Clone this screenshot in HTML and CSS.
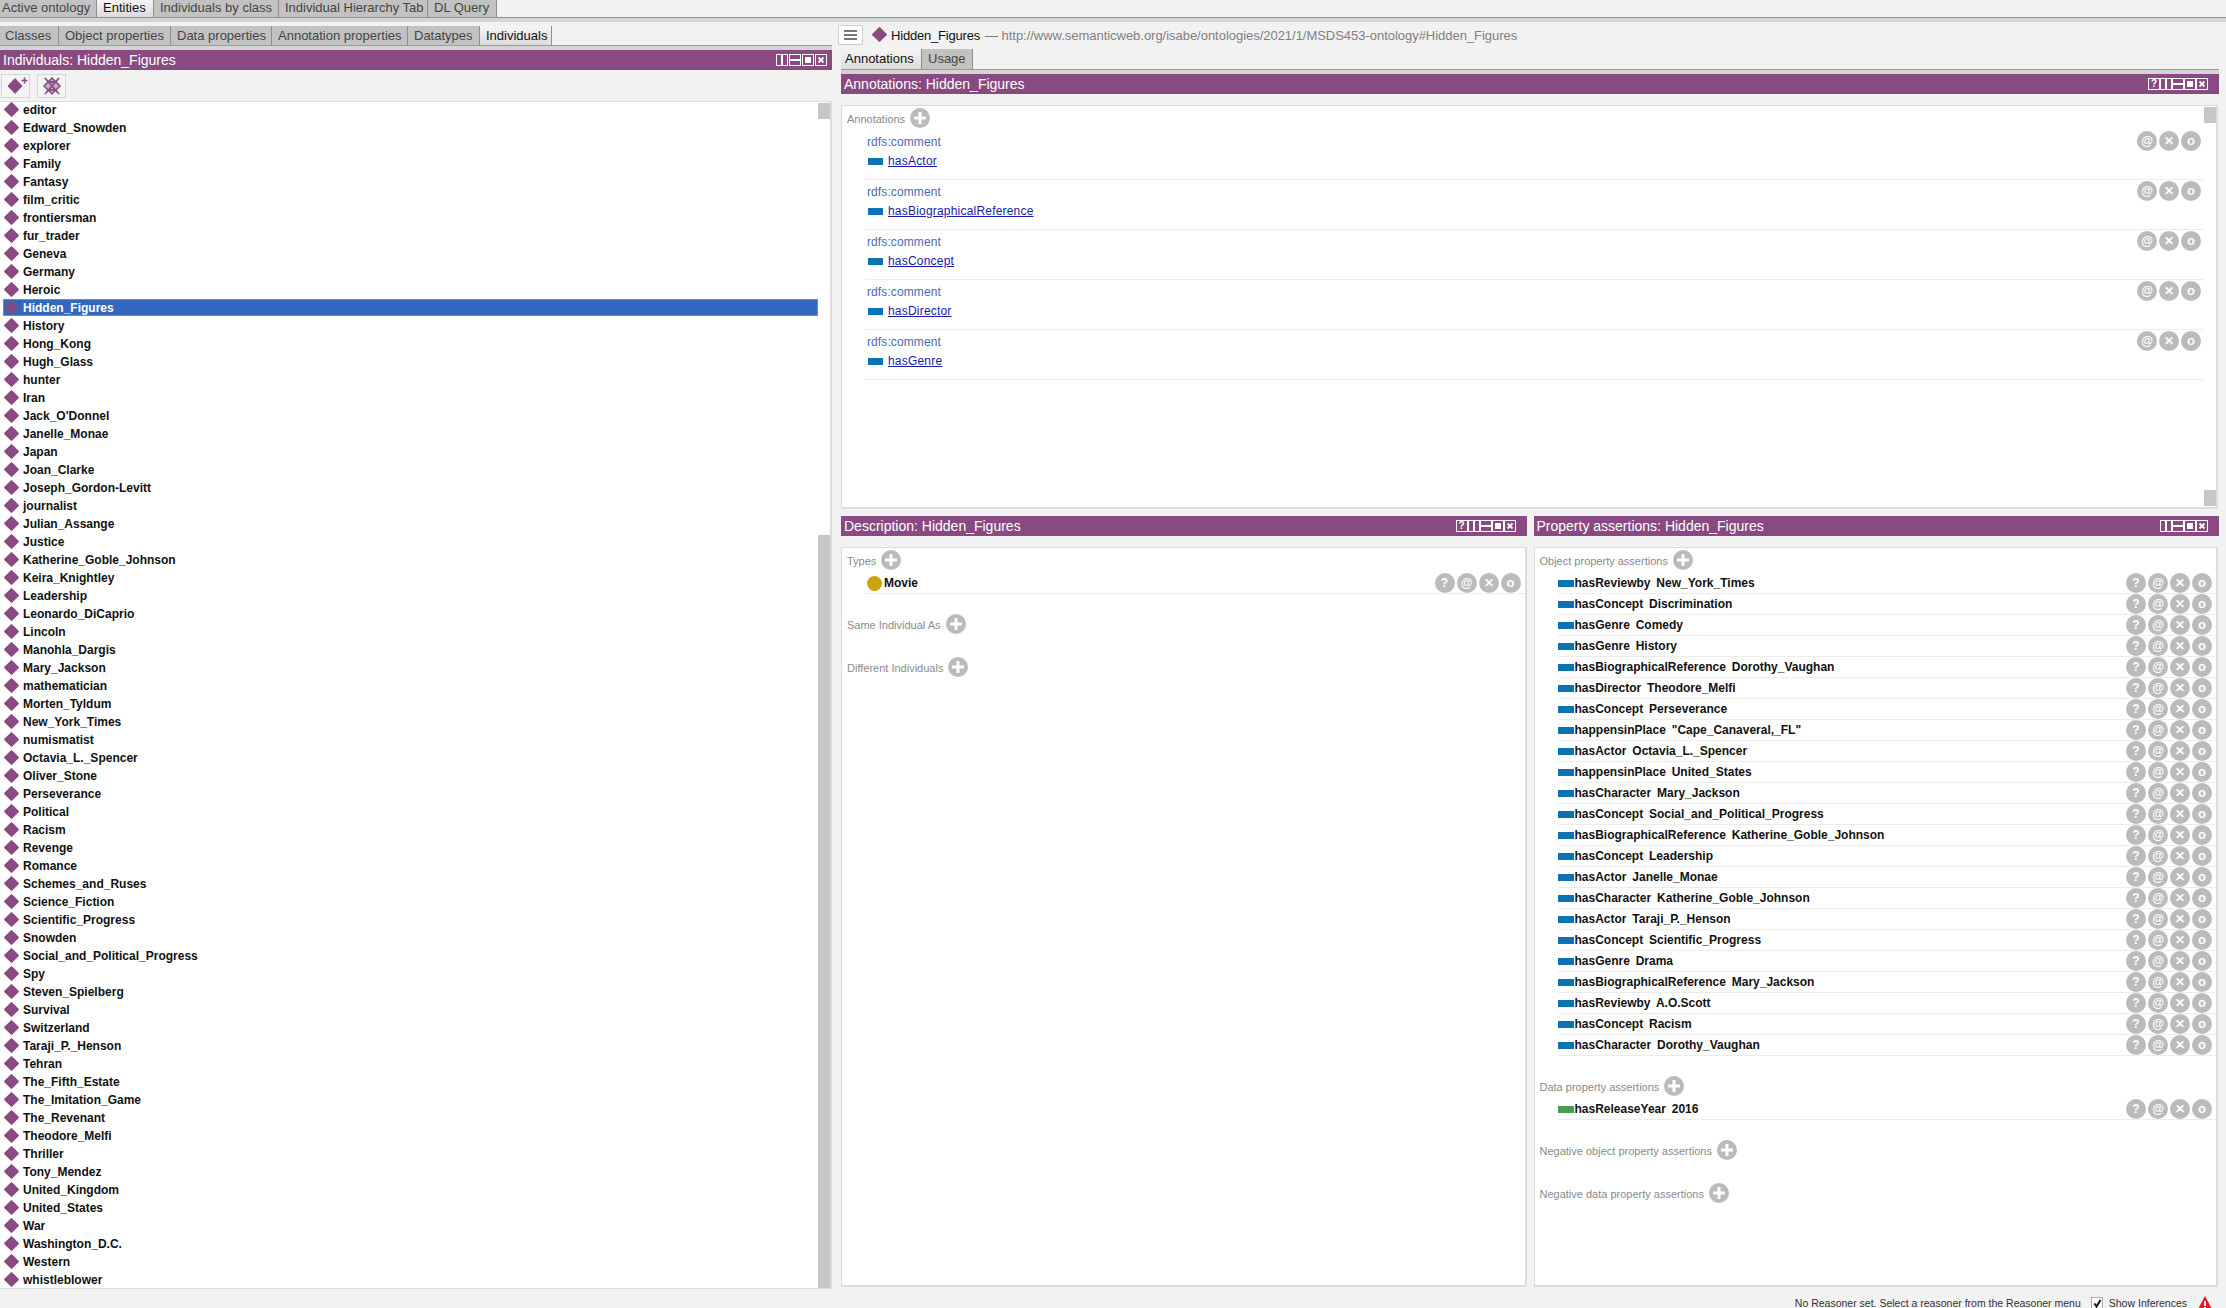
FILE: index.html
```html
<!DOCTYPE html>
<html lang="en">
<head>
    <meta charset="UTF-8">
    <title>Protege - Individuals</title>
    <link rel="stylesheet" href="styles.css">
</head>
<body>
    <svg class="sprite" width="0" height="0">
        <symbol id="win-vsplit" viewBox="0 0 12 12"><rect x=".5" y=".5" width="11" height="11" fill="none" stroke="#fff"/><rect x="5" y="0" width="2" height="12" fill="#fff"/></symbol>
        <symbol id="win-hsplit" viewBox="0 0 12 12"><rect x=".5" y=".5" width="11" height="11" fill="none" stroke="#fff"/><rect x="0" y="5" width="12" height="2" fill="#fff"/></symbol>
        <symbol id="win-max" viewBox="0 0 12 12"><rect x=".5" y=".5" width="11" height="11" fill="none" stroke="#fff"/><rect x="3" y="3" width="6" height="6" fill="#fff"/></symbol>
        <symbol id="win-close" viewBox="0 0 12 12"><rect x=".5" y=".5" width="11" height="11" fill="none" stroke="#fff"/><path d="M3.5 3.5l5 5M8.5 3.5l-5 5" stroke="#fff" stroke-width="1.8"/></symbol>
        <symbol id="plus" viewBox="0 0 20 20"><circle cx="10" cy="10" r="10" fill="#bbb"/><path d="M10 4v12M4 10h12" stroke="#fff" stroke-width="3"/></symbol>
    </svg>

    <div class="app">
        <div class="main-tabs">
            <span class="tab w97">Active ontology</span>
            <span class="tab tab-on w57">Entities</span>
            <span class="tab w125">Individuals by class</span>
            <span class="tab w149">Individual Hierarchy Tab</span>
            <span class="tab w69">DL Query</span>
        </div>
        <div class="band-top"></div>

        <div class="workspace">
            <div class="left">
                <div class="sub-tabs">
                    <span class="tab w59">Classes</span>
                    <span class="tab w112">Object properties</span>
                    <span class="tab w101">Data properties</span>
                    <span class="tab w136">Annotation properties</span>
                    <span class="tab w72">Datatypes</span>
                    <span class="tab tab-on w72">Individuals</span>
                </div>
                <div class="band"></div>
                <div class="view-head">
                    <span>Individuals: Hidden_Figures</span>
                    <div class="win-btns">
                        <svg><use href="#win-vsplit"/></svg><svg><use href="#win-hsplit"/></svg><svg><use href="#win-max"/></svg><svg><use href="#win-close"/></svg>
                    </div>
                </div>
                <div class="toolbar">
                    <button class="tool">
                        <svg width="26" height="20" viewBox="0 0 26 20"><path d="M12 2.5l7 7.5-7 7.5-7-7.5z" fill="#884a80" stroke="#884a80" stroke-linejoin="round"/><path d="M21.5 1.5v6M18.5 4.5h6" stroke="#884a80" stroke-width="1.6"/></svg>
                    </button>
                    <button class="tool">
                        <svg width="20" height="20" viewBox="0 0 20 20"><path d="M10 2l8 8-8 8-8-8z" fill="#c9aec6" stroke="#884a80" stroke-width="1.5"/><path d="M3 2l14 16M17 2L3 18M6 6h8M6 14h8" stroke="#884a80" stroke-width="1.8" fill="none"/></svg>
                    </button>
                </div>
                <div class="list-panel">
                    <ul class="ind-list">
                        <li>editor</li>
                        <li>Edward_Snowden</li>
                        <li>explorer</li>
                        <li>Family</li>
                        <li>Fantasy</li>
                        <li>film_critic</li>
                        <li>frontiersman</li>
                        <li>fur_trader</li>
                        <li>Geneva</li>
                        <li>Germany</li>
                        <li>Heroic</li>
                        <li class="selected">Hidden_Figures</li>
                        <li>History</li>
                        <li>Hong_Kong</li>
                        <li>Hugh_Glass</li>
                        <li>hunter</li>
                        <li>Iran</li>
                        <li>Jack_O'Donnel</li>
                        <li>Janelle_Monae</li>
                        <li>Japan</li>
                        <li>Joan_Clarke</li>
                        <li>Joseph_Gordon-Levitt</li>
                        <li>journalist</li>
                        <li>Julian_Assange</li>
                        <li>Justice</li>
                        <li>Katherine_Goble_Johnson</li>
                        <li>Keira_Knightley</li>
                        <li>Leadership</li>
                        <li>Leonardo_DiCaprio</li>
                        <li>Lincoln</li>
                        <li>Manohla_Dargis</li>
                        <li>Mary_Jackson</li>
                        <li>mathematician</li>
                        <li>Morten_Tyldum</li>
                        <li>New_York_Times</li>
                        <li>numismatist</li>
                        <li>Octavia_L._Spencer</li>
                        <li>Oliver_Stone</li>
                        <li>Perseverance</li>
                        <li>Political</li>
                        <li>Racism</li>
                        <li>Revenge</li>
                        <li>Romance</li>
                        <li>Schemes_and_Ruses</li>
                        <li>Science_Fiction</li>
                        <li>Scientific_Progress</li>
                        <li>Snowden</li>
                        <li>Social_and_Political_Progress</li>
                        <li>Spy</li>
                        <li>Steven_Spielberg</li>
                        <li>Survival</li>
                        <li>Switzerland</li>
                        <li>Taraji_P._Henson</li>
                        <li>Tehran</li>
                        <li>The_Fifth_Estate</li>
                        <li>The_Imitation_Game</li>
                        <li>The_Revenant</li>
                        <li>Theodore_Melfi</li>
                        <li>Thriller</li>
                        <li>Tony_Mendez</li>
                        <li>United_Kingdom</li>
                        <li>United_States</li>
                        <li>War</li>
                        <li>Washington_D.C.</li>
                        <li>Western</li>
                        <li>whistleblower</li>
                    </ul>
                    <div class="rail rail-left">
                        <div class="thumb"></div>
                        <div class="rail-gap"></div>
                        <div class="thumb thumb-long"></div>
                    </div>
                </div>
            </div>

            <div class="right">
                <div class="entity-bar">
                    <button class="menu-btn"><i></i><i></i><i></i></button>
                    <span class="diamond-big"></span>
                    <span class="entity-name">Hidden_Figures</span>
                    <span class="entity-iri">&mdash; http://www.semanticweb.org/isabe/ontologies/2021/1/MSDS453-ontology#Hidden_Figures</span>
                </div>
                <div class="sub-tabs side-tabs">
                    <span class="tab tab-on w81">Annotations</span>
                    <span class="tab w51">Usage</span>
                </div>
                <div class="band"></div>
                <div class="view-head">
                    <span>Annotations: Hidden_Figures</span>
                    <div class="win-btns">
                        <span class="win-help">?</span><svg><use href="#win-vsplit"/></svg><svg><use href="#win-hsplit"/></svg><svg><use href="#win-max"/></svg><svg><use href="#win-close"/></svg>
                    </div>
                </div>

                <div class="box box-annot">
                    <div class="box-body">
                        <div class="section-title"><span>Annotations</span><svg class="plus"><use href="#plus"/></svg></div>
                        <div class="annot">
                            <div class="annot-text"><div class="annot-prop">rdfs:comment</div><div class="annot-val"><b class="prop-ico"></b><a>hasActor</a></div></div>
                            <div class="round-btns"><span class="rb">@</span><span class="rb">&#10005;</span><span class="rb rb-o">o</span></div>
                        </div>
                        <div class="annot">
                            <div class="annot-text"><div class="annot-prop">rdfs:comment</div><div class="annot-val"><b class="prop-ico"></b><a>hasBiographicalReference</a></div></div>
                            <div class="round-btns"><span class="rb">@</span><span class="rb">&#10005;</span><span class="rb rb-o">o</span></div>
                        </div>
                        <div class="annot">
                            <div class="annot-text"><div class="annot-prop">rdfs:comment</div><div class="annot-val"><b class="prop-ico"></b><a>hasConcept</a></div></div>
                            <div class="round-btns"><span class="rb">@</span><span class="rb">&#10005;</span><span class="rb rb-o">o</span></div>
                        </div>
                        <div class="annot">
                            <div class="annot-text"><div class="annot-prop">rdfs:comment</div><div class="annot-val"><b class="prop-ico"></b><a>hasDirector</a></div></div>
                            <div class="round-btns"><span class="rb">@</span><span class="rb">&#10005;</span><span class="rb rb-o">o</span></div>
                        </div>
                        <div class="annot">
                            <div class="annot-text"><div class="annot-prop">rdfs:comment</div><div class="annot-val"><b class="prop-ico"></b><a>hasGenre</a></div></div>
                            <div class="round-btns"><span class="rb">@</span><span class="rb">&#10005;</span><span class="rb rb-o">o</span></div>
                        </div>
                    </div>
                    <div class="rail rail-annot">
                        <div class="thumb"></div>
                        <div class="rail-gap"></div>
                        <div class="thumb"></div>
                    </div>
                </div>

                <div class="bottom-views">
                    <div class="view">
                        <div class="view-head">
                            <span>Description: Hidden_Figures</span>
                            <div class="win-btns">
                                <span class="win-help">?</span><svg><use href="#win-vsplit"/></svg><svg><use href="#win-hsplit"/></svg><svg><use href="#win-max"/></svg><svg><use href="#win-close"/></svg>
                            </div>
                        </div>
                        <div class="box box-fill">
                            <div class="box-body">
                                <div class="section-title"><span>Types</span><svg class="plus"><use href="#plus"/></svg></div>
                                <div class="frame-row type-row">
                                    <b class="class-ico"></b><span class="row-text">Movie</span>
                                    <div class="round-btns"><span class="rb">?</span><span class="rb">@</span><span class="rb">&#10005;</span><span class="rb rb-o">o</span></div>
                                </div>
                                <div class="section-title sec-gap"><span>Same Individual As</span><svg class="plus"><use href="#plus"/></svg></div>
                                <div class="section-title sec-gap2"><span>Different Individuals</span><svg class="plus"><use href="#plus"/></svg></div>
                            </div>
                        </div>
                    </div>

                    <div class="view">
                        <div class="view-head">
                            <span>Property assertions: Hidden_Figures</span>
                            <div class="win-btns">
                                <svg><use href="#win-vsplit"/></svg><svg><use href="#win-hsplit"/></svg><svg><use href="#win-max"/></svg><svg><use href="#win-close"/></svg>
                            </div>
                        </div>
                        <div class="box box-fill">
                            <div class="box-body">
                                <div class="section-title"><span>Object property assertions</span><svg class="plus"><use href="#plus"/></svg></div>
                                <div class="frame-row"><b class="prop-ico"></b><span class="row-text">hasReviewby New_York_Times</span><div class="round-btns"><span class="rb">?</span><span class="rb">@</span><span class="rb">&#10005;</span><span class="rb rb-o">o</span></div></div>
                                <div class="frame-row"><b class="prop-ico"></b><span class="row-text">hasConcept Discrimination</span><div class="round-btns"><span class="rb">?</span><span class="rb">@</span><span class="rb">&#10005;</span><span class="rb rb-o">o</span></div></div>
                                <div class="frame-row"><b class="prop-ico"></b><span class="row-text">hasGenre Comedy</span><div class="round-btns"><span class="rb">?</span><span class="rb">@</span><span class="rb">&#10005;</span><span class="rb rb-o">o</span></div></div>
                                <div class="frame-row"><b class="prop-ico"></b><span class="row-text">hasGenre History</span><div class="round-btns"><span class="rb">?</span><span class="rb">@</span><span class="rb">&#10005;</span><span class="rb rb-o">o</span></div></div>
                                <div class="frame-row"><b class="prop-ico"></b><span class="row-text">hasBiographicalReference Dorothy_Vaughan</span><div class="round-btns"><span class="rb">?</span><span class="rb">@</span><span class="rb">&#10005;</span><span class="rb rb-o">o</span></div></div>
                                <div class="frame-row"><b class="prop-ico"></b><span class="row-text">hasDirector Theodore_Melfi</span><div class="round-btns"><span class="rb">?</span><span class="rb">@</span><span class="rb">&#10005;</span><span class="rb rb-o">o</span></div></div>
                                <div class="frame-row"><b class="prop-ico"></b><span class="row-text">hasConcept Perseverance</span><div class="round-btns"><span class="rb">?</span><span class="rb">@</span><span class="rb">&#10005;</span><span class="rb rb-o">o</span></div></div>
                                <div class="frame-row"><b class="prop-ico"></b><span class="row-text">happensinPlace "Cape_Canaveral,_FL"</span><div class="round-btns"><span class="rb">?</span><span class="rb">@</span><span class="rb">&#10005;</span><span class="rb rb-o">o</span></div></div>
                                <div class="frame-row"><b class="prop-ico"></b><span class="row-text">hasActor Octavia_L._Spencer</span><div class="round-btns"><span class="rb">?</span><span class="rb">@</span><span class="rb">&#10005;</span><span class="rb rb-o">o</span></div></div>
                                <div class="frame-row"><b class="prop-ico"></b><span class="row-text">happensinPlace United_States</span><div class="round-btns"><span class="rb">?</span><span class="rb">@</span><span class="rb">&#10005;</span><span class="rb rb-o">o</span></div></div>
                                <div class="frame-row"><b class="prop-ico"></b><span class="row-text">hasCharacter Mary_Jackson</span><div class="round-btns"><span class="rb">?</span><span class="rb">@</span><span class="rb">&#10005;</span><span class="rb rb-o">o</span></div></div>
                                <div class="frame-row"><b class="prop-ico"></b><span class="row-text">hasConcept Social_and_Political_Progress</span><div class="round-btns"><span class="rb">?</span><span class="rb">@</span><span class="rb">&#10005;</span><span class="rb rb-o">o</span></div></div>
                                <div class="frame-row"><b class="prop-ico"></b><span class="row-text">hasBiographicalReference Katherine_Goble_Johnson</span><div class="round-btns"><span class="rb">?</span><span class="rb">@</span><span class="rb">&#10005;</span><span class="rb rb-o">o</span></div></div>
                                <div class="frame-row"><b class="prop-ico"></b><span class="row-text">hasConcept Leadership</span><div class="round-btns"><span class="rb">?</span><span class="rb">@</span><span class="rb">&#10005;</span><span class="rb rb-o">o</span></div></div>
                                <div class="frame-row"><b class="prop-ico"></b><span class="row-text">hasActor Janelle_Monae</span><div class="round-btns"><span class="rb">?</span><span class="rb">@</span><span class="rb">&#10005;</span><span class="rb rb-o">o</span></div></div>
                                <div class="frame-row"><b class="prop-ico"></b><span class="row-text">hasCharacter Katherine_Goble_Johnson</span><div class="round-btns"><span class="rb">?</span><span class="rb">@</span><span class="rb">&#10005;</span><span class="rb rb-o">o</span></div></div>
                                <div class="frame-row"><b class="prop-ico"></b><span class="row-text">hasActor Taraji_P._Henson</span><div class="round-btns"><span class="rb">?</span><span class="rb">@</span><span class="rb">&#10005;</span><span class="rb rb-o">o</span></div></div>
                                <div class="frame-row"><b class="prop-ico"></b><span class="row-text">hasConcept Scientific_Progress</span><div class="round-btns"><span class="rb">?</span><span class="rb">@</span><span class="rb">&#10005;</span><span class="rb rb-o">o</span></div></div>
                                <div class="frame-row"><b class="prop-ico"></b><span class="row-text">hasGenre Drama</span><div class="round-btns"><span class="rb">?</span><span class="rb">@</span><span class="rb">&#10005;</span><span class="rb rb-o">o</span></div></div>
                                <div class="frame-row"><b class="prop-ico"></b><span class="row-text">hasBiographicalReference Mary_Jackson</span><div class="round-btns"><span class="rb">?</span><span class="rb">@</span><span class="rb">&#10005;</span><span class="rb rb-o">o</span></div></div>
                                <div class="frame-row"><b class="prop-ico"></b><span class="row-text">hasReviewby A.O.Scott</span><div class="round-btns"><span class="rb">?</span><span class="rb">@</span><span class="rb">&#10005;</span><span class="rb rb-o">o</span></div></div>
                                <div class="frame-row"><b class="prop-ico"></b><span class="row-text">hasConcept Racism</span><div class="round-btns"><span class="rb">?</span><span class="rb">@</span><span class="rb">&#10005;</span><span class="rb rb-o">o</span></div></div>
                                <div class="frame-row"><b class="prop-ico"></b><span class="row-text">hasCharacter Dorothy_Vaughan</span><div class="round-btns"><span class="rb">?</span><span class="rb">@</span><span class="rb">&#10005;</span><span class="rb rb-o">o</span></div></div>
                                <div class="section-title sec-data"><span>Data property assertions</span><svg class="plus"><use href="#plus"/></svg></div>
                                <div class="frame-row"><b class="prop-ico prop-data"></b><span class="row-text">hasReleaseYear 2016</span><div class="round-btns"><span class="rb">?</span><span class="rb">@</span><span class="rb">&#10005;</span><span class="rb rb-o">o</span></div></div>
                                <div class="section-title sec-gap"><span>Negative object property assertions</span><svg class="plus"><use href="#plus"/></svg></div>
                                <div class="section-title sec-gap2"><span>Negative data property assertions</span><svg class="plus"><use href="#plus"/></svg></div>
                            </div>
                        </div>
                    </div>
                </div>
            </div>
        </div>

        <div class="status">
            <span>No Reasoner set. Select a reasoner from the Reasoner menu</span>
            <span class="check">
                <svg width="11" height="11" viewBox="0 0 11 11"><path d="M2.5 5.5l2 3 4-6.5" fill="none" stroke="#111" stroke-width="2"/></svg>
            </span>
            <span class="show-inf">Show Inferences</span>
            <svg class="warn" width="16" height="15" viewBox="0 0 16 15"><path d="M8 0l8 15H0z" fill="#e8181c"/><path d="M8 5v5" stroke="#fff" stroke-width="2"/><path d="M8 11v2" stroke="#fff" stroke-width="2"/></svg>
        </div>
    </div>
</body>
</html>
```
FILE: styles.css
```css
html, body{
    margin: 0;
    padding: 0;
    height: 100%;
    overflow: hidden;
    background-color: #f2f2f2;
    font-family: "Liberation Sans", Arial, sans-serif;
    font-size: 12px;
}
.sprite{
    position: absolute;
}
.app{
    height: 1308px;
    display: flex;
    flex-direction: column;
    overflow: hidden;
}

/* tabs */
.main-tabs{
    height: 17px;
    display: flex;
    border-bottom: 1px solid #8f8f8f;
    flex-shrink: 0;
}
.band-top{
    height: 4px;
    background-color: #d4d4d4;
    flex-shrink: 0;
}
.tab{
    box-sizing: border-box;
    height: 100%;
    background-color: #c2c2c2;
    border-right: 1px solid #8f8f8f;
    color: #444;
    font-size: 13px;
    line-height: 16px;
    padding-left: 2px;
    white-space: nowrap;
}
.tab-on{
    background: linear-gradient(#f5f5f5, #dcdcdc);
    color: #111;
    padding-left: 6px;
}
.w57{ width: 57px; }
.w59{ width: 59px; padding-left: 5px; }
.w69{ width: 69px; padding-left: 6px; }
.w72{ width: 72px; padding-left: 6px; }
.w81{ width: 81px; padding-left: 4px; }
.w51{ width: 51px; padding-left: 6px; }
.w97{ width: 97px; }
.w101{ width: 101px; padding-left: 6px; }
.w112{ width: 112px; padding-left: 6px; }
.w125{ width: 125px; padding-left: 6px; }
.w136{ width: 136px; padding-left: 6px; }
.w149{ width: 149px; padding-left: 6px; }

.workspace{
    flex: 1;
    min-height: 0;
    display: flex;
    gap: 9px;
    padding-top: 3px;
}
.left{
    width: 832px;
    flex-shrink: 0;
    display: flex;
    flex-direction: column;
}
.right{
    width: 1378px;
    display: flex;
    flex-direction: column;
}
.sub-tabs{
    height: 19px;
    padding-top: 1px;
    display: flex;
    border-bottom: 1px solid #9a9a9a;
    flex-shrink: 0;
}
.sub-tabs .tab{
    line-height: 20px;
}
.band{
    height: 4px;
    background-color: #d4d4d4;
    flex-shrink: 0;
}

.view-head{
    height: 20px;
    background-color: #884a80;
    color: white;
    font-size: 14px;
    line-height: 20px;
    padding: 0 5px 0 3px;
    display: flex;
    justify-content: space-between;
    align-items: center;
    flex-shrink: 0;
    white-space: nowrap;
}
.win-btns{
    display: flex;
    margin-right: 6px;
}
.left .win-btns{
    gap: 1px;
    margin-right: 0;
}
.win-btns svg{
    width: 12px;
    height: 12px;
    display: block;
}
.win-help{
    box-sizing: border-box;
    width: 12px;
    height: 12px;
    border: 1px solid white;
    font-size: 10px;
    font-weight: bold;
    line-height: 10px;
    text-align: center;
}

.toolbar{
    height: 31px;
    border-bottom: 1px solid #dcdcdc;
    display: flex;
    gap: 7px;
    padding-left: 1px;
    align-items: center;
    flex-shrink: 0;
}
.tool{
    width: 29px;
    height: 24px;
    margin: 0;
    padding: 0;
    background-color: #f5f5f5;
    border: 1px solid #d6d6d6;
    display: flex;
    align-items: center;
    justify-content: center;
}

/* individuals list */
.list-panel{
    flex: 1;
    min-height: 0;
    display: flex;
    background-color: white;
    border-right: 2px solid #dcdcdc;
    border-bottom: 1px solid #dcdcdc;
}
.ind-list{
    flex: 1;
    margin: 0;
    padding: 0 0 0 3px;
    list-style-type: none;
}
.ind-list li{
    height: 18px;
    line-height: 16px;
    padding-left: 23px;
    margin-left: -3px;
    font-weight: bold;
    color: #111;
    position: relative;
    white-space: nowrap;
}
.ind-list li::before{
    content: "";
    position: absolute;
    left: 5.5px;
    top: 2px;
    width: 11px;
    height: 11px;
    background-color: #884a80;
    border-radius: 1px;
    transform: rotate(45deg);
}
.ind-list li.selected{
    height: 17px;
    background-color: #3168c0;
    color: white;
    box-shadow: inset 0 0 0 1px #a08850;
    margin: -1px 0 2px;
    padding-left: 20px;
    line-height: 18px;
}
.ind-list li.selected::before{
    left: 2.5px;
    top: 3px;
    opacity: 0.85;
}
.rail{
    width: 12px;
    display: flex;
    flex-direction: column;
    flex-shrink: 0;
}
.rail-left{
    padding: 1px 0 0;
}
.thumb{
    height: 16px;
    background-color: #c6c6c6;
    flex-shrink: 0;
}
.thumb-long{
    height: 753px;
}
.rail-gap{
    flex: 1;
}

/* entity bar */
.entity-bar{
    height: 24px;
    margin-left: -3px;
    display: flex;
    align-items: flex-start;
    flex-shrink: 0;
    white-space: nowrap;
}
.menu-btn{
    box-sizing: border-box;
    width: 25px;
    height: 20px;
    margin: 0 9px 0 0;
    padding: 4px 5px;
    background-color: white;
    border: 1px solid #cfcfcf;
    display: flex;
    flex-direction: column;
    justify-content: space-between;
}
.menu-btn i{
    display: block;
    height: 2px;
    background-color: #777;
}
.diamond-big{
    width: 11px;
    height: 11px;
    margin: 4px 6px 0 2px;
    background-color: #884a80;
    border-radius: 1px;
    transform: rotate(45deg);
}
.entity-name{
    font-size: 13px;
    line-height: 22px;
    letter-spacing: -0.2px;
    color: #111;
    margin-right: 5px;
}
.entity-iri{
    font-size: 13px;
    line-height: 22px;
    letter-spacing: -0.03px;
    color: #808080;
}
.side-tabs{
    height: 20px;
    padding-top: 0;
}

/* frames */
.box{
    box-sizing: border-box;
    margin-top: 11px;
    background-color: white;
    border: 1px solid #dcdcdc;
    border-right-width: 2px;
    border-bottom-width: 2px;
    display: flex;
}
.box-annot{
    height: 404px;
    margin-right: 1px;
}
.box-fill{
    flex: 1;
    min-height: 0;
}
.view + .view .box-fill{
    margin-right: 1px;
}
.box-body{
    flex: 1;
    min-width: 0;
}
.rail-annot{
    padding: 1px 0;
}
.section-title{
    box-sizing: border-box;
    height: 28px;
    padding: 0 0 2px 5px;
    display: flex;
    align-items: center;
    gap: 5px;
    color: #8a8a8a;
    font-size: 11px;
}
.plus{
    width: 20px;
    height: 20px;
    display: block;
    margin-top: -3px;
}
.sec-gap{
    margin-top: 18px;
}
.sec-gap2{
    margin-top: 15px;
}
.sec-data{
    margin-top: 18px;
}

.annot{
    box-sizing: border-box;
    height: 50px;
    margin-left: 23px;
    padding: 3px 0 0 2px;
    border-bottom: 1px solid #ececec;
    display: flex;
    justify-content: space-between;
    align-items: flex-start;
}
.section-title + .annot{
    margin-top: -4px;
}
.annot-prop{
    height: 19px;
    line-height: 18px;
    color: #4a6bb0;
    font-size: 12px;
    letter-spacing: 0.1px;
}
.annot-val{
    height: 18px;
    display: flex;
    align-items: center;
    line-height: 18px;
}
.annot-val .prop-ico{
    width: 15px;
    margin-left: 1px;
}
.annot-val a{
    margin-left: 5px;
    color: #1a1aa8;
    letter-spacing: 0.2px;
    text-decoration: underline;
}
.annot .round-btns{
    margin-top: -2px;
    margin-right: 3px;
}
.prop-ico{
    width: 16px;
    height: 7px;
    background-color: #0b72b4;
    flex-shrink: 0;
}
.prop-data{
    background-color: #4a9c50;
}
.class-ico{
    width: 15px;
    height: 15px;
    border-radius: 50%;
    background-color: #cba50c;
    margin-right: 1px;
    flex-shrink: 0;
}

.round-btns{
    display: flex;
    gap: 2px;
    margin-right: 4px;
}
.rb{
    width: 20px;
    height: 20px;
    border-radius: 50%;
    background-color: #bbb;
    color: white;
    font-size: 12px;
    font-weight: bold;
    line-height: 20px;
    text-align: center;
}
.rb-o{
    font-size: 13px;
}

.frame-row{
    box-sizing: border-box;
    height: 21px;
    margin-left: 23px;
    border-bottom: 1px solid #ececec;
    display: flex;
    align-items: center;
}
.section-title + .frame-row{
    margin-top: -3px;
}
.type-row{
    padding-left: 2px;
}
.row-text{
    margin-left: 1px;
    font-weight: bold;
    color: #111;
    word-spacing: 2.5px;
    white-space: nowrap;
}
.frame-row .round-btns{
    margin-left: auto;
    margin-right: 4px;
}

.bottom-views{
    flex: 1;
    min-height: 0;
    display: flex;
    gap: 7px;
    margin-top: 7px;
    margin-bottom: 2px;
}
.view{
    flex: 1;
    min-width: 0;
    display: flex;
    flex-direction: column;
}

/* status line */
.status{
    box-sizing: border-box;
    height: 19px;
    flex-shrink: 0;
    display: flex;
    justify-content: flex-end;
    align-items: center;
    padding: 8px 13px 0 0;
    font-size: 10.5px;
    color: #333;
}
.check{
    box-sizing: border-box;
    width: 12px;
    height: 12px;
    margin-left: 10px;
    background-color: white;
    border: 1px solid #aaa;
}
.check svg{
    display: block;
}
.show-inf{
    margin-left: 6px;
}
.warn{
    margin-left: 10px;
    align-self: flex-start;
    margin-top: -1px;
}
```
